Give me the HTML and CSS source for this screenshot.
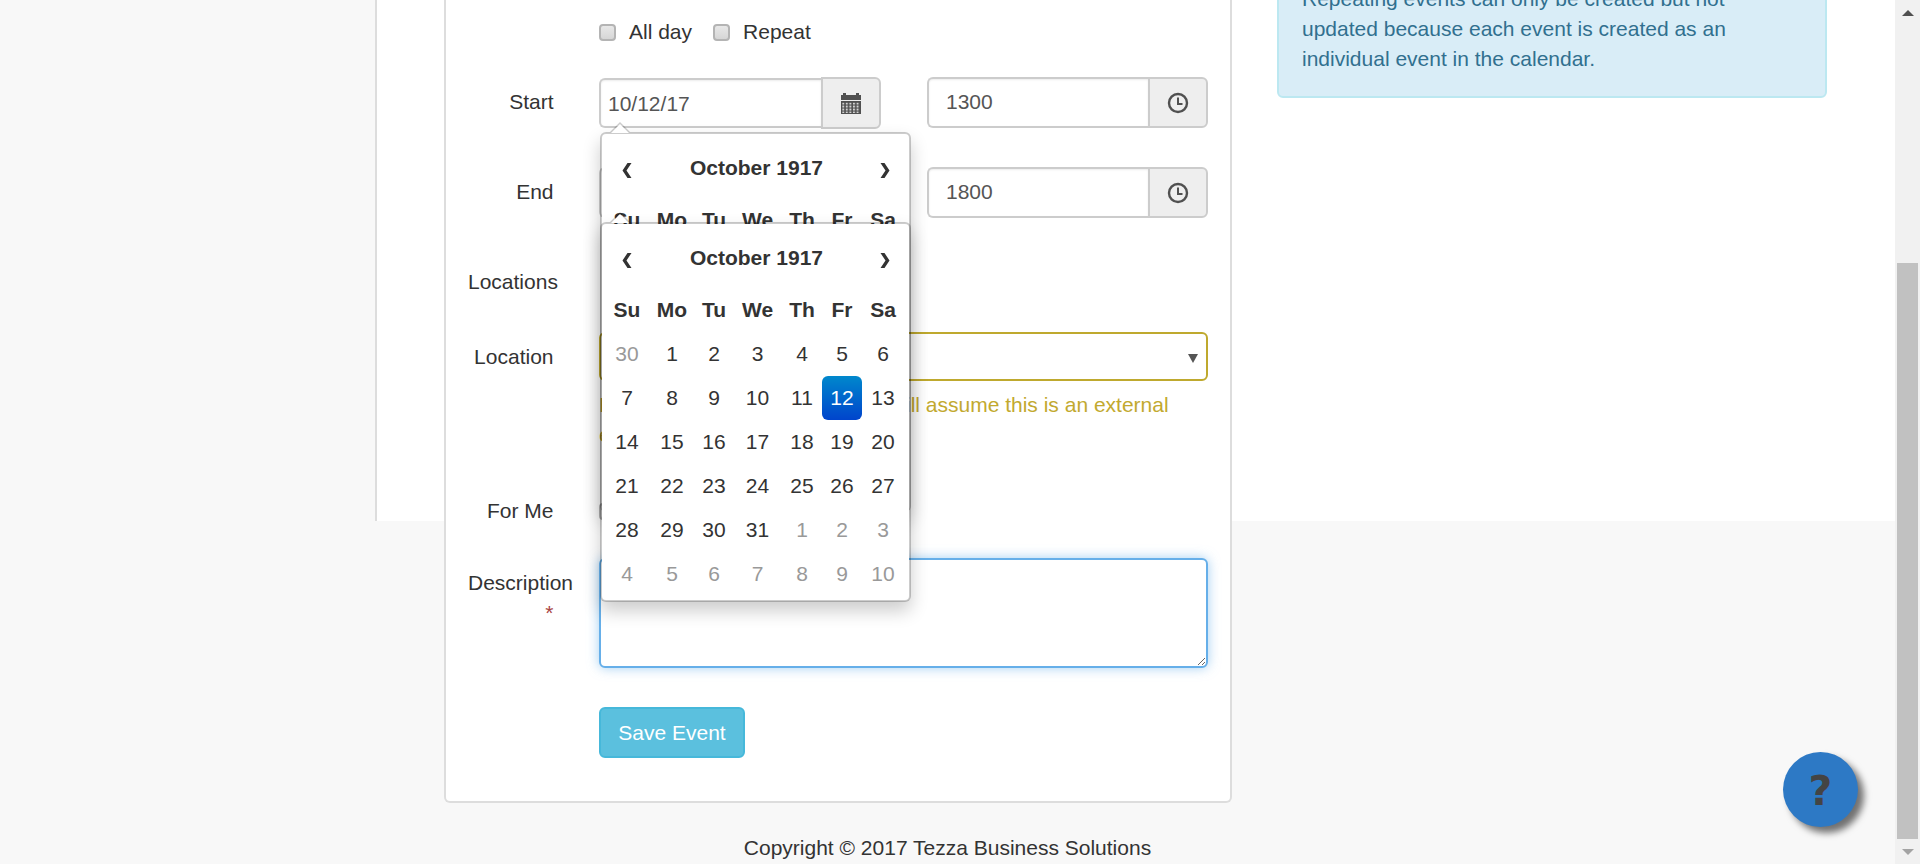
FILE: index.html
```html
<html>
<head>
<title>New Event</title>
<link rel="stylesheet" href="styles.css">
</head>

<body>

<div class="main">
  <div class="sheet"></div>

  <div class="columns">
    <div class="card">

      <div class="checks">
        <label class="check"><input type="checkbox"> All day</label>
        <label class="check"><input type="checkbox"> Repeat</label>
      </div>

      <div class="field field-start">
        <label class="field-label">Start</label>
        <div class="pair">
          <div class="group group-date">
            <input class="control control-date" type="text" value="10/12/17">
            <span class="addon">
              <svg width="20" height="21" viewBox="0 0 20 21">
                <defs>
                  <pattern id="cells" width="3.6" height="3" patternUnits="userSpaceOnUse" x="1.2" y="9.6">
                    <rect width="2" height="1.8" fill="#ddd"/>
                  </pattern>
                </defs>
                <path fill="#505050" d="M2 0h3v2h10V0h3v2h2v5H0V2h2zM0 8h20v13H0z"/>
                <rect x="1.2" y="9.6" width="17.8" height="10.4" fill="url(#cells)"/>
              </svg>
            </span>
          </div>
          <div class="group">
            <input class="control control-time" type="text" value="1300">
            <span class="addon">
              <svg width="22" height="22" viewBox="0 0 22 22" fill="none" stroke="#505050" stroke-width="2.4">
                <circle cx="11" cy="11" r="9"/>
                <path d="M11 5.5V12H15.5" stroke-width="2"/>
              </svg>
            </span>
          </div>
        </div>
      </div>

      <div class="field">
        <label class="field-label">End</label>
        <div class="pair">
          <div class="group">
            <input class="control control-date" type="text" value="10/12/17">
            <span class="addon"></span>
          </div>
          <div class="group">
            <input class="control control-time" type="text" value="1800">
            <span class="addon">
              <svg width="22" height="22" viewBox="0 0 22 22" fill="none" stroke="#505050" stroke-width="2.4">
                <circle cx="11" cy="11" r="9"/>
                <path d="M11 5.5V12H15.5" stroke-width="2"/>
              </svg>
            </span>
          </div>
        </div>
      </div>

      <div class="field field-locations">
        <label class="field-label">Locations</label>
        <div></div>
      </div>

      <div class="field field-location">
        <label class="field-label">Location</label>
        <div>
          <div class="select"></div>
          <p class="warning">If a location is not selected, we will assume this is an external event</p>
        </div>
      </div>

      <div class="field field-me">
        <label class="field-label">For Me</label>
        <label class="check check-me"><input type="checkbox"> Tick if this event is for me</label>
      </div>

      <div class="field">
        <label class="field-label">Description <span class="req">*</span></label>
        <textarea class="description"></textarea>
      </div>

      <button class="save">Save Event</button>

      <!-- two pickers left open, one on top of the other -->
      <div class="picker picker-start">
        <div class="picker-title">
          <svg class="chev" width="10" height="15" viewBox="0 0 10 15"><path fill="#333" d="M5.5 0H9.5L4.5 7.5 9.5 15H5.5L0.5 7.5z"/></svg>
          <b>October 1917</b>
          <svg class="chev" width="10" height="15" viewBox="0 0 10 15"><path fill="#333" d="M4.5 0H0.5L5.5 7.5 0.5 15H4.5L9.5 7.5z"/></svg>
        </div>
        <div class="days days-head">
          <b>Su</b><b>Mo</b><b>Tu</b><b>We</b><b>Th</b><b>Fr</b><b>Sa</b>
        </div>
      </div>

      <div class="picker picker-end">
        <div class="picker-title">
          <svg class="chev" width="10" height="15" viewBox="0 0 10 15"><path fill="#333" d="M5.5 0H9.5L4.5 7.5 9.5 15H5.5L0.5 7.5z"/></svg>
          <b>October 1917</b>
          <svg class="chev" width="10" height="15" viewBox="0 0 10 15"><path fill="#333" d="M4.5 0H0.5L5.5 7.5 0.5 15H4.5L9.5 7.5z"/></svg>
        </div>
        <div class="days days-head">
          <b>Su</b><b>Mo</b><b>Tu</b><b>We</b><b>Th</b><b>Fr</b><b>Sa</b>
        </div>
        <div class="days">
          <span class="old">30</span><span>1</span><span>2</span><span>3</span><span>4</span><span>5</span><span>6</span>
          <span>7</span><span>8</span><span>9</span><span>10</span><span>11</span><span class="active">12</span><span>13</span>
          <span>14</span><span>15</span><span>16</span><span>17</span><span>18</span><span>19</span><span>20</span>
          <span>21</span><span>22</span><span>23</span><span>24</span><span>25</span><span>26</span><span>27</span>
          <span>28</span><span>29</span><span>30</span><span>31</span><span class="old">1</span><span class="old">2</span><span class="old">3</span>
          <span class="old">4</span><span class="old">5</span><span class="old">6</span><span class="old">7</span><span class="old">8</span><span class="old">9</span><span class="old">10</span>
        </div>
      </div>

    </div>

    <div class="alert">Repeating events can only be created but not updated because each event is created as an individual event in the calendar.</div>
  </div>

  <div class="footer">Copyright &copy; 2017 Tezza Business Solutions</div>

  <a class="help">?</a>
</div>

<div class="scrollbar">
  <div class="scroll-btn"><i class="arrow-up"></i></div>
  <div class="track"><div class="thumb"></div></div>
  <div class="scroll-btn"><i class="arrow-down"></i></div>
</div>

</body>
</html>
```

FILE: styles.css
```css
html, body {
  margin: 0;
  height: 864px;
  overflow: hidden;
}

body {
  display: flex;
  background: #f8f8f8;
  color: #333;
  font-family: "Liberation Sans", Arial, sans-serif;
  font-size: 21px;
  line-height: 30px;
}

.main {
  position: relative;
  width: 1895px;
}

.sheet {
  position: absolute;
  left: 375px;
  top: 0;
  right: 0;
  height: 521px;
  background: #fff;
  border-left: 2px solid #ddd;
}

.columns {
  position: relative;
  display: flex;
  align-items: flex-start;
  padding-left: 444px;
}

.card {
  position: relative;
  box-sizing: border-box;
  width: 788px;
  height: 803px;
  padding: 17px 22px 0;
  background: #fff;
  border: 2px solid #ddd;
  border-top: 0;
  border-radius: 0 0 6px 6px;
}

.checks {
  display: flex;
  gap: 21px;
  height: 30px;
  margin: 0 0 30px 131px;
}

.check {
  display: flex;
  align-items: center;
  gap: 13px;
}

.check input {
  appearance: none;
  box-sizing: border-box;
  width: 17px;
  height: 17px;
  margin: 0;
  background: linear-gradient(#e8e8e8, #d6d6d6);
  border: 2px solid #b4b4b4;
  border-radius: 4px;
}

.field {
  display: grid;
  grid-template-columns: 85.5px 1fr;
  column-gap: 45.5px;
  margin-bottom: 39px;
}

.field-start { margin-bottom: 38px; }
.field-locations { margin-bottom: 35px; }
.field-location { margin-bottom: 36px; }
.field-me { margin-bottom: 32px; }

.field-label {
  padding-top: 10px;
  text-align: right;
  white-space: nowrap;
}

.field-label:has(.req) { white-space: normal; }

.req {
  color: #a94442;
  display: block;
}

.pair {
  display: grid;
  grid-template-columns: 282px 281px;
  column-gap: 46px;
}

.group {
  display: flex;
  height: 51px;
}

.control {
  flex: 1;
  min-width: 0;
  box-sizing: border-box;
  height: 51px;
  background: #fff;
  border: 2px solid #ccc;
  border-right: 0;
  border-radius: 6px 0 0 6px;
  box-shadow: inset 0 1px 2px rgba(0,0,0,.08);
  color: #555;
  font: inherit;
  outline: none;
}

.control-date { padding: 2px 0 0 7px; }
.control-time { padding: 0 0 2px 17px; }

.group-date { height: 52px; }
.group-date .control { height: 50px; margin-top: 1px; }

.addon {
  display: flex;
  align-items: center;
  justify-content: center;
  box-sizing: border-box;
  width: 60px;
  background: #eee;
  border: 2px solid #ccc;
  border-radius: 0 6px 6px 0;
}

.select {
  position: relative;
  box-sizing: border-box;
  height: 49px;
  border: 2px solid #bfa92e;
  border-radius: 6px;
}

.select::after {
  content: "";
  position: absolute;
  right: 8px;
  top: 20px;
  border-style: solid;
  border-width: 9px 5px 0;
  border-color: #555 transparent transparent;
}

.warning {
  margin: 9px 0 0;
  color: #c2a92f;
}

.check-me {
  padding-top: 10px;
  align-self: start;
}

.description {
  display: block;
  box-sizing: border-box;
  width: 609px;
  height: 110px;
  background: #fff;
  border: 2px solid #66afe9;
  border-radius: 6px;
  box-shadow: 0 0 12px rgba(102,175,233,.6);
  outline: none;
}

.save {
  display: block;
  box-sizing: border-box;
  width: 146px;
  height: 51px;
  margin-left: 131px;
  background: #5bc0de;
  border: 2px solid #46b8da;
  border-radius: 6px;
  color: #fff;
  font: inherit;
}

.picker {
  position: absolute;
  left: 154px;
  box-sizing: border-box;
  width: 311px;
  height: 380px;
  padding: 12px 3px 0;
  background: #fff;
  background-clip: padding-box;
  border: 2px solid rgba(0,0,0,.2);
  border-radius: 6px;
  box-shadow: 0 9px 18px rgba(0,0,0,.2);
}

.picker-start { top: 132px; }
.picker-end { top: 222px; }

.picker::before {
  content: "";
  position: absolute;
  left: 8px;
  top: -12px;
  border-style: solid;
  border-width: 0 10px 10px;
  border-color: transparent transparent rgba(0,0,0,.2);
}

.picker::after {
  content: "";
  position: absolute;
  left: 9px;
  top: -10px;
  border-style: solid;
  border-width: 0 9px 9px;
  border-color: transparent transparent #fff;
}

.picker-title {
  display: grid;
  grid-template-columns: 44px 1fr 42px;
  align-items: center;
  justify-items: center;
  height: 44px;
  margin-bottom: 8px;
}

.chev { margin-top: 5px; }

.days {
  display: grid;
  grid-template-columns: 44px 46px 38px 49px 40px 40px 42px;
  grid-auto-rows: 44px;
  line-height: 44px;
  text-align: center;
}

.old { color: #999; }

.active {
  background: linear-gradient(#08c, #04c);
  border-radius: 6px;
  color: #fff;
}

.alert {
  box-sizing: border-box;
  width: 550px;
  margin: -41px 0 0 45px;
  padding: 22.5px 23px;
  background: #d9edf7;
  border: 2px solid #bce8f1;
  border-radius: 6px;
  color: #31708f;
}

.footer {
  padding-top: 30px;
  text-align: center;
}

.help {
  position: absolute;
  right: 37px;
  top: 752px;
  width: 75px;
  height: 75px;
  background: #2d79c5;
  border-radius: 50%;
  box-shadow: 6px 6px 7px rgba(0,0,0,.55);
  color: #444;
  font: bold 41px/78px "DejaVu Sans", sans-serif;
  text-align: center;
}

.scrollbar {
  display: flex;
  flex-direction: column;
  width: 25px;
  height: 864px;
  background: #f1f1f1;
}

.scroll-btn {
  display: flex;
  align-items: center;
  justify-content: center;
  height: 25px;
  flex: none;
}

.arrow-up, .arrow-down {
  border-style: solid;
  border-color: transparent;
}

.arrow-up {
  border-width: 0 6px 6px;
  border-bottom-color: #505050;
}

.arrow-down {
  border-width: 6px 6px 0;
  border-top-color: #a3a3a3;
  margin-top: 1px;
}

.track {
  flex: 1;
  display: flex;
  box-sizing: border-box;
  padding: 238px 2px 0;
}

.thumb {
  flex: 1;
  background: #c1c1c1;
}
```
